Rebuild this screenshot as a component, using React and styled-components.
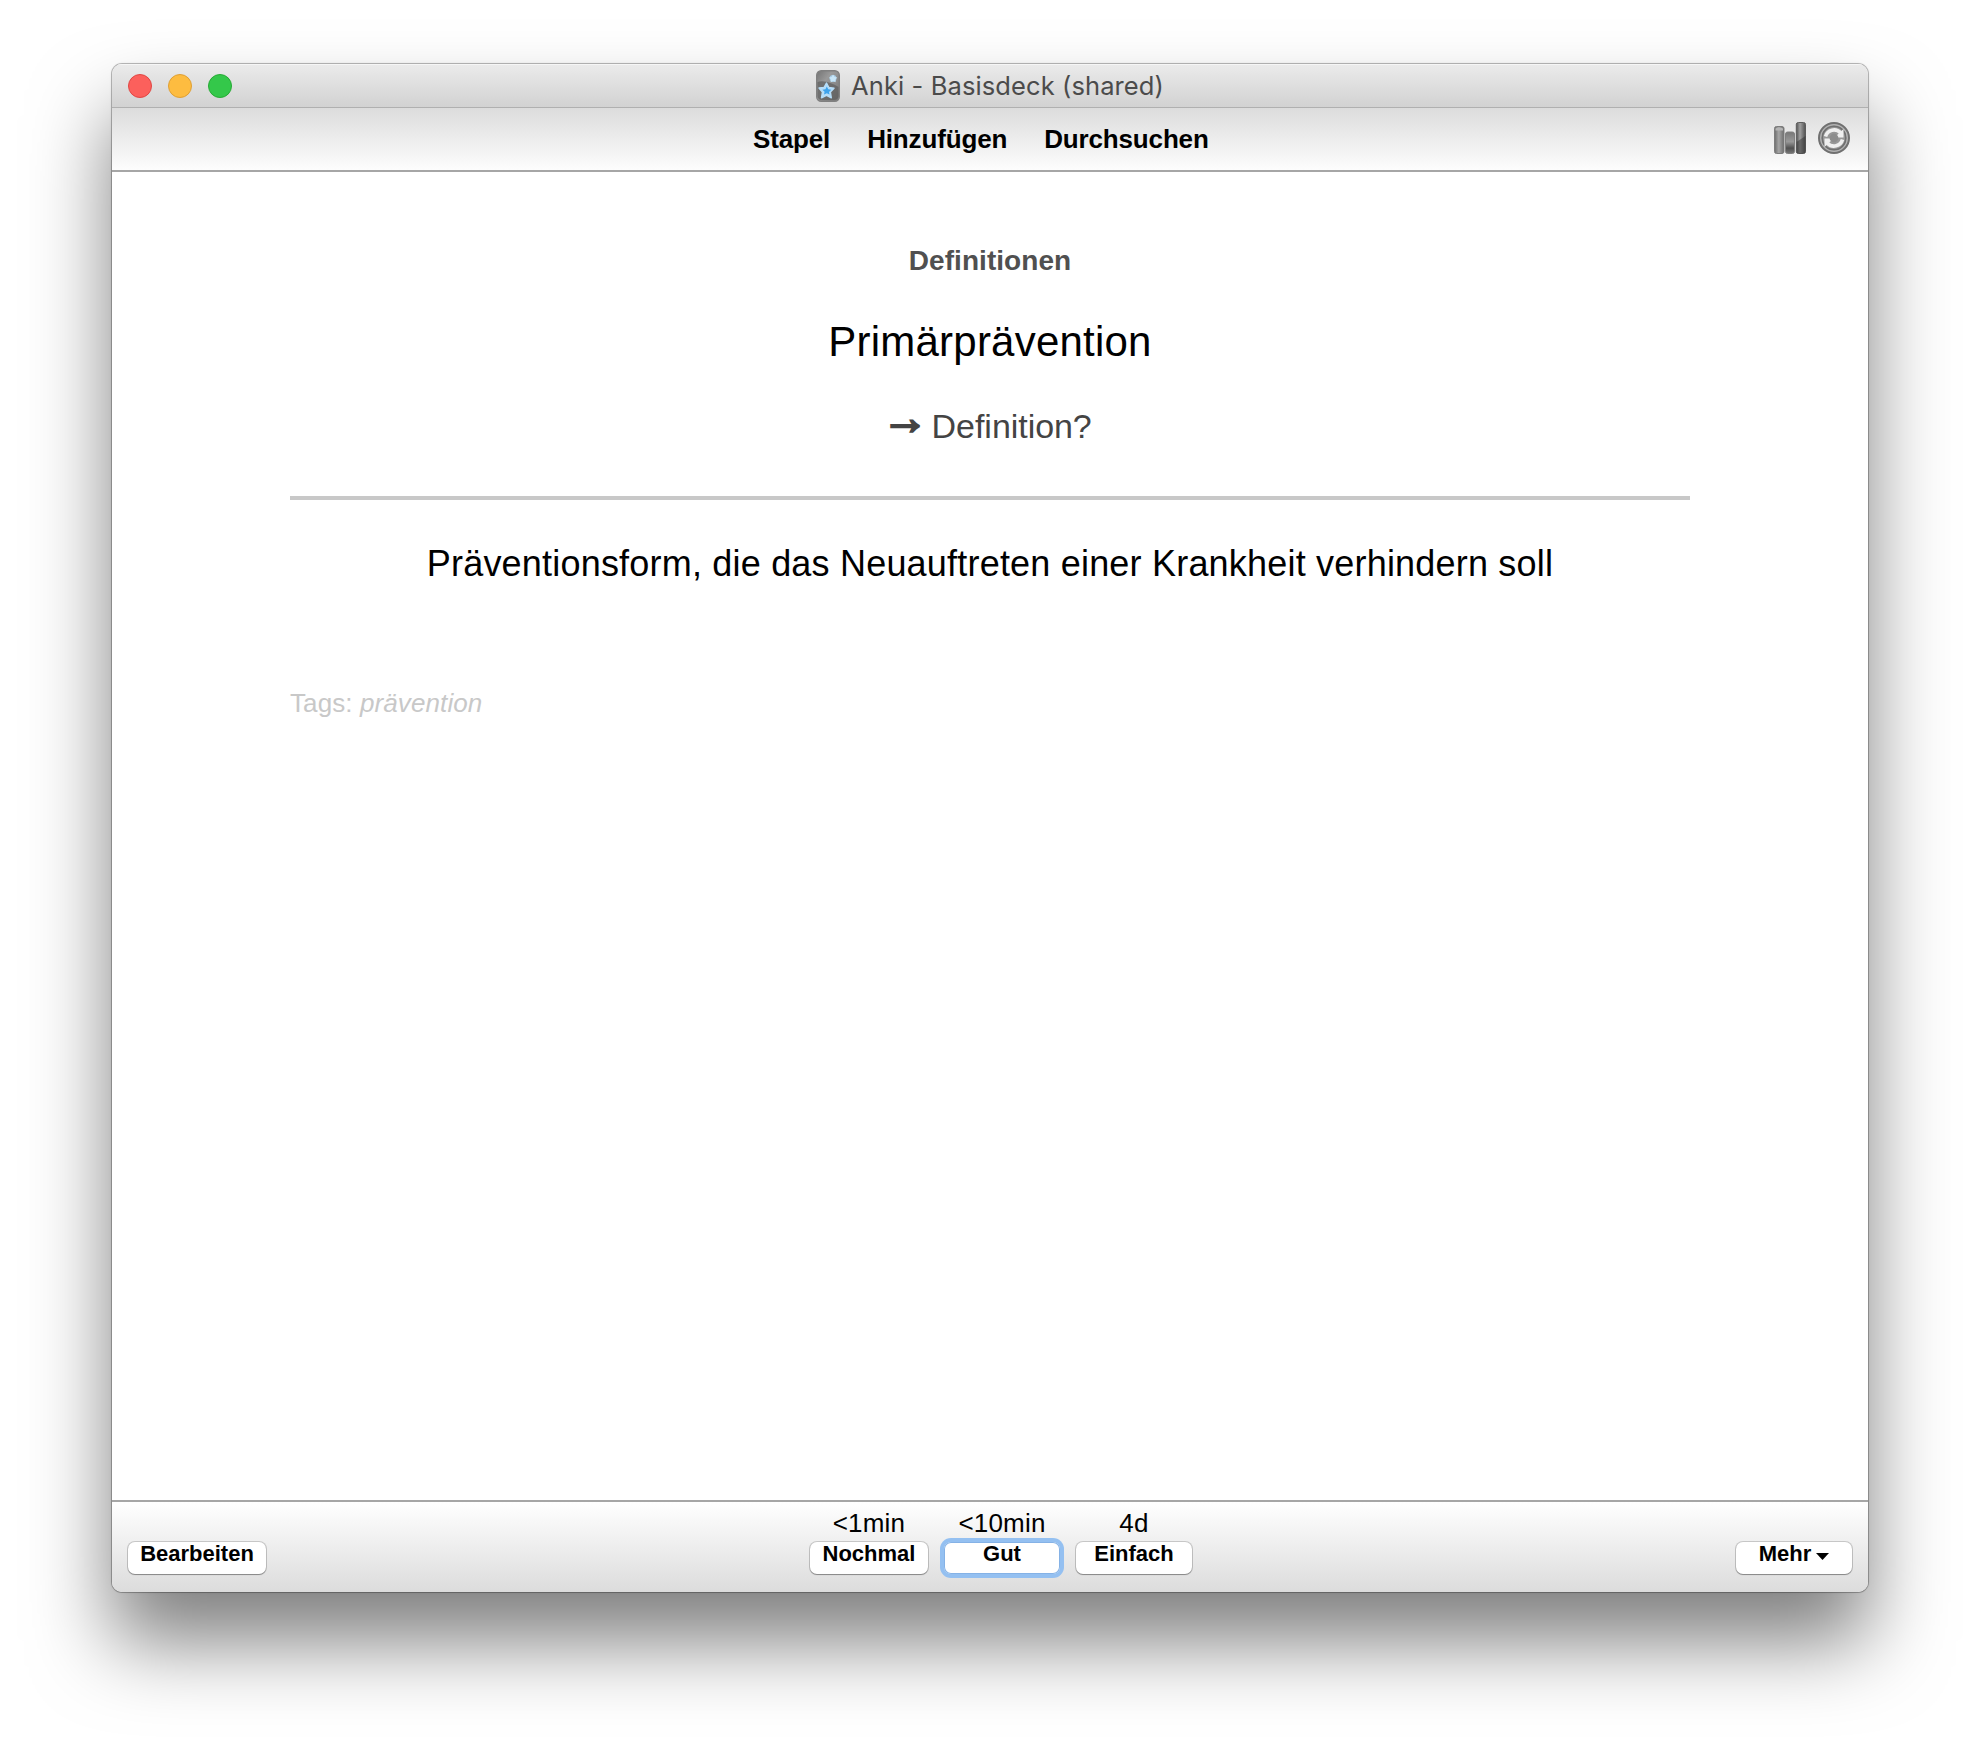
import React from 'react';
import styled, { createGlobalStyle } from 'styled-components';

const GlobalStyle = createGlobalStyle`
  *, *::before, *::after { box-sizing: border-box; }
  html, body { margin: 0; padding: 0; background: #fff; }
  body { overflow: hidden; font-family: "Liberation Sans", Helvetica, Arial, sans-serif; color: #000; }
`;

const Desktop = styled.div`
  width: 1980px;
  height: 1752px;
  padding: 64px 112px 160px;
  overflow: hidden;
`;

const Window = styled.main`
  display: flex;
  flex-direction: column;
  height: 1528px;
  border-radius: 10px;
  background: #fff;
  overflow: hidden;
  box-shadow: 0 0 0 1px rgba(0, 0, 0, 0.24), 0 0 3px rgba(0, 0, 0, 0.14), 0 50px 80px rgba(0, 0, 0, 0.5);
`;

const TitleBar = styled.header`
  display: grid;
  grid-template-columns: 1fr auto 1fr;
  align-items: center;
  flex: none;
  height: 44px;
  padding: 0 16px;
  background: linear-gradient(#ebebeb, #d2d2d2);
  border-bottom: 1px solid #b0b0b0;
  box-shadow: inset 0 1px 0 #f6f6f6;
`;

const Lights = styled.div`
  display: flex;
  gap: 16px;
`;

const Light = styled.span`
  width: 24px;
  height: 24px;
  border-radius: 50%;
  background: ${(p) => p.$fill};
  border: 1px solid ${(p) => p.$edge};
`;

const Title = styled.h1`
  display: flex;
  align-items: center;
  gap: 11px;
  margin: 0;
  font: 400 25.5px/32px Inter, Roboto, sans-serif;
  letter-spacing: 0.1px;
  color: #4b4b4b;
  white-space: nowrap;

  svg { display: block; }
`;

const TitleText = styled.span`
  padding-top: 1px;
`;

const Toolbar = styled.nav`
  display: flex;
  align-items: flex-start;
  justify-content: space-between;
  flex: none;
  height: 64px;
  padding: 0 18px 0 641px;
  background: linear-gradient(#dcdcdc, #fdfdfd);
  border-bottom: 2px solid #a6a6a6;
`;

const Links = styled.div`
  display: flex;
  gap: 37px;
  padding-top: 16px;
`;

const NavLink = styled.a`
  font-size: 26px;
  font-weight: 700;
  line-height: 30px;
  letter-spacing: -0.15px;
`;

const Tools = styled.div`
  display: flex;
  gap: 12px;
  padding-top: 14px;

  svg { display: block; }
`;

const Card = styled.section`
  display: flex;
  flex-direction: column;
  align-items: center;
  flex: 1;
  padding: 68px 178px 0;
`;

const Topic = styled.div`
  font-size: 28px;
  font-weight: 700;
  line-height: 41px;
  letter-spacing: 0.05px;
  color: #505050;
`;

const Term = styled.div`
  margin-top: 36px;
  font-size: 42px;
  line-height: 49px;
  letter-spacing: 0.22px;
`;

const Prompt = styled.div`
  height: 40px;
  margin-top: 40px;
  font-size: 34px;
  line-height: 40px;
  letter-spacing: -0.05px;
  color: #444;
`;

const Arrow = styled.span`
  margin: 0 -6px;
  font-size: 46px;
  line-height: 0;
  vertical-align: 4px;
  -webkit-text-stroke: 2.4px #444;
`;

const Rule = styled.hr`
  width: 100%;
  height: 4px;
  margin: 50px 0 42px;
  border: 0;
  background: #c8c8c8;
`;

const Answer = styled.div`
  font-size: 36px;
  line-height: 43px;
  letter-spacing: 0.2px;
  white-space: nowrap;
`;

const Tags = styled.div`
  align-self: flex-start;
  margin-top: 103px;
  font-size: 26px;
  line-height: 30px;
  letter-spacing: 0.1px;
  color: #c8c8c8;
`;

const BottomBar = styled.footer`
  display: grid;
  grid-template-columns: 1fr auto 1fr;
  align-items: end;
  flex: none;
  height: 92px;
  padding: 0 16px 18px;
  border-top: 2px solid #a6a6a6;
  background: linear-gradient(#fff, #dcdcdc);
`;

const Answers = styled.div`
  display: flex;
  gap: 16px;
  margin-left: 22px;
`;

const Choice = styled.div`
  display: flex;
  flex-direction: column;
  align-items: center;
`;

const Interval = styled.span`
  margin-bottom: 4px;
  font-size: 26px;
  line-height: 30px;
  letter-spacing: 0.2px;
`;

const Button = styled.button`
  display: flex;
  align-items: flex-start;
  justify-content: center;
  justify-self: ${(p) => p.$side || 'auto'};
  gap: 5px;
  width: ${(p) => p.$width}px;
  height: 32px;
  padding: 0;
  border: 0;
  border-radius: 7px;
  background: #fff;
  color: #000;
  font: 700 22px/24px "Liberation Sans", Helvetica, Arial, sans-serif;
  letter-spacing: 0;
  box-shadow: ${(p) =>
    p.$focused
      ? 'inset 0 0 0 1px #85b2e6, 0 0 0 4px #94c0f1'
      : '0 0 0 1px rgba(0, 0, 0, 0.17), 0 1px 1px rgba(0, 0, 0, 0.28)'};
`;

const Caret = styled.svg`
  display: block;
  margin-top: 11px;
`;

function AnkiIcon() {
  return (
    <svg width="24" height="32" viewBox="0 0 24 32">
      <defs>
        <linearGradient id="deck" x1="0" y1="0" x2="1" y2="1">
          <stop offset="0" stopColor="#747474" />
          <stop offset="0.35" stopColor="#999" />
          <stop offset="1" stopColor="#747474" />
        </linearGradient>
      </defs>
      <rect x="0.7" y="0.7" width="22.6" height="30.6" rx="4.5" fill="url(#deck)" stroke="#808080" strokeWidth="1.4" />
      <path d="M1.5 12C8 10 16 13 22.5 17V26Q22 30 18 30H6Q2 30 1.5 26Z" fill="#5a5a5a" opacity="0.65" />
      <circle cx="17" cy="8.5" r="3.4" fill="#a9cfe8" />
      <path d="M17 4.5l1.5 2.5 2.8.4-2 2 .4 2.9-2.6-1.2-2.5 1.2.4-2.8-2-2 2.8-.6z" fill="#c8e6f8" />
      <path d="M10.5 13l2.4 4.5 5.1.8-3.6 3.7.9 5.8-4.8-2.4-5 2.4.9-5.8L3 18l5.1-.6z" fill="#b5ddf8" stroke="#b5ddf8" strokeWidth="1.4" strokeLinejoin="round" />
      <path d="M10.8 16.4l1.5 2.8 3 .5-2.3 2.3.5 2.6-2.7-1.3-2.8 1.3.6-2.8-2.2-2.1 3-.5z" fill="#3ea3ec" />
    </svg>
  );
}

function StatsIcon() {
  return (
    <svg width="32" height="32" viewBox="0 0 32 32">
      <defs>
        <linearGradient id="barLight" x1="0" x2="1">
          <stop offset="0" stopColor="#6c6c6c" />
          <stop offset="0.45" stopColor="#a6a6a6" />
          <stop offset="1" stopColor="#6c6c6c" />
        </linearGradient>
        <linearGradient id="barMid" x1="0" y1="0" x2="0" y2="1">
          <stop offset="0" stopColor="#777" />
          <stop offset="0.45" stopColor="#999" />
          <stop offset="0.75" stopColor="#505050" />
          <stop offset="1" stopColor="#777" />
        </linearGradient>
        <linearGradient id="barDark" x1="0" x2="1">
          <stop offset="0" stopColor="#505050" />
          <stop offset="0.4" stopColor="#a0a0a0" />
          <stop offset="1" stopColor="#505050" />
        </linearGradient>
      </defs>
      <rect x="0.5" y="4.5" width="9.5" height="27" rx="2" fill="url(#barLight)" stroke="#7c7c7c" />
      <path d="M1.5 6.5Q5 4.5 9 6.5v2H1.5z" fill="#b5b5b5" />
      <rect x="11.5" y="10" width="9" height="21.5" rx="2" fill="url(#barMid)" stroke="#808080" />
      <rect x="22.3" y="0.5" width="9.2" height="31" rx="2" fill="url(#barDark)" stroke="#5c5c5c" />
      <path d="M22.5 20L31.5 14v15q0 2.5-2 2.5h-5q-2 0-2-2z" fill="#333" opacity="0.5" />
    </svg>
  );
}

function SyncIcon() {
  return (
    <svg width="32" height="32" viewBox="0 0 32 32">
      <circle cx="16" cy="16" r="15" fill="#a0a0a0" stroke="#707070" strokeWidth="2" />
      <circle cx="16" cy="16" r="11.8" fill="#989898" stroke="#707070" strokeWidth="1.6" />
      <circle cx="16" cy="16" r="13.4" fill="none" stroke="#b4b4b4" strokeWidth="1" />
      <path d="M7.5 14.5A8.8 8.8 0 0 1 22.5 10.8" fill="none" stroke="#efefef" strokeWidth="3.6" />
      <path d="M25.5 7v8.6h-9z" fill="#efefef" />
      <path d="M24.5 17.5A8.8 8.8 0 0 1 9.5 21.2" fill="none" stroke="#efefef" strokeWidth="3.6" />
      <path d="M6.5 25v-8.6h9z" fill="#efefef" />
      <circle cx="16" cy="16" r="4.4" fill="#8d8d8d" />
    </svg>
  );
}

const lights = [
  { fill: '#fc605c', edge: '#df4744' },
  { fill: '#fdbc40', edge: '#de9f34' },
  { fill: '#34c84a', edge: '#27aa35' },
];

const choices = [
  { interval: '<1min', label: 'Nochmal', width: 118 },
  { interval: '<10min', label: 'Gut', width: 116, focused: true },
  { interval: '4d', label: 'Einfach', width: 116 },
];

export default function App() {
  return (
    <Desktop>
      <GlobalStyle />
      <Window>
        <TitleBar>
          <Lights>
            {lights.map((l) => (
              <Light key={l.fill} $fill={l.fill} $edge={l.edge} />
            ))}
          </Lights>
          <Title>
            <AnkiIcon />
            <TitleText>Anki - Basisdeck (shared)</TitleText>
          </Title>
        </TitleBar>
        <Toolbar>
          <Links>
            <NavLink>Stapel</NavLink>
            <NavLink>Hinzufügen</NavLink>
            <NavLink>Durchsuchen</NavLink>
          </Links>
          <Tools>
            <StatsIcon />
            <SyncIcon />
          </Tools>
        </Toolbar>
        <Card>
          <Topic>Definitionen</Topic>
          <Term>Primärprävention</Term>
          <Prompt>
            <Arrow>→</Arrow> Definition?
          </Prompt>
          <Rule />
          <Answer>Präventionsform, die das Neuauftreten einer Krankheit verhindern soll</Answer>
          <Tags>
            Tags: <i>prävention</i>
          </Tags>
        </Card>
        <BottomBar>
          <Button $width={138} $side="start">Bearbeiten</Button>
          <Answers>
            {choices.map((c) => (
              <Choice key={c.label}>
                <Interval>{c.interval}</Interval>
                <Button $width={c.width} $focused={c.focused}>{c.label}</Button>
              </Choice>
            ))}
          </Answers>
          <Button $width={116} $side="end">
            Mehr
            <Caret width="13" height="7" viewBox="0 0 13 7">
              <path d="M0 0h13L6.5 7z" fill="#000" />
            </Caret>
          </Button>
        </BottomBar>
      </Window>
    </Desktop>
  );
}
